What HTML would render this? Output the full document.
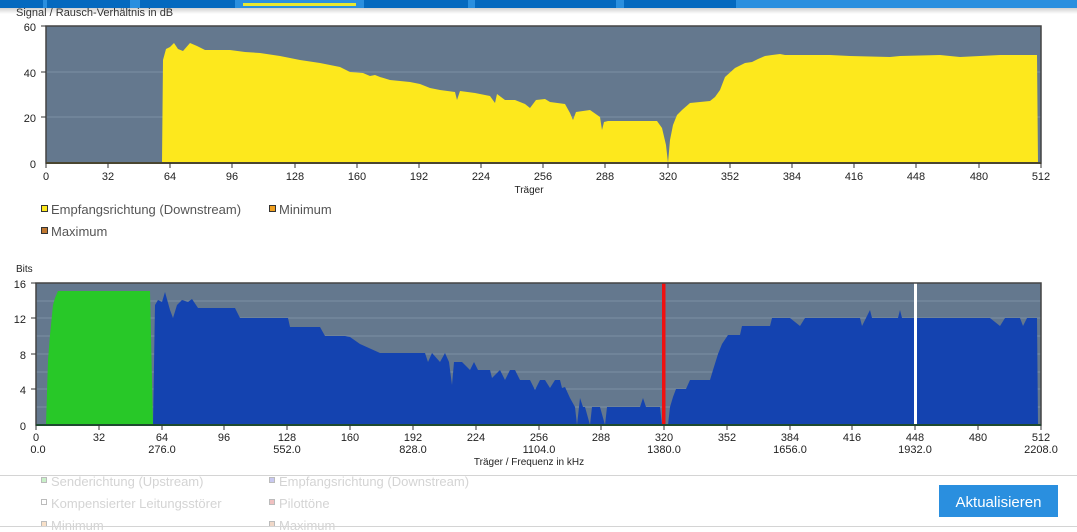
<!DOCTYPE html>
<html><head><meta charset="utf-8"><style>
html,body{margin:0;padding:0;background:#fff;width:1077px;height:532px;overflow:hidden}
svg{display:block;font-family:"Liberation Sans",sans-serif}
</style></head><body>
<svg width="1077" height="532" viewBox="0 0 1077 532" xmlns="http://www.w3.org/2000/svg">
<defs><linearGradient id="sh" x1="0" y1="0" x2="0" y2="1"><stop offset="0" stop-color="#000" stop-opacity="0.18"/><stop offset="1" stop-color="#000" stop-opacity="0"/></linearGradient></defs>
<!-- top bar -->
<rect x="0" y="0" width="1077" height="8" fill="#2a8fdf"/>
<rect x="0" y="0" width="43" height="8" fill="#0469bf"/>
<rect x="47" y="0" width="83" height="8" fill="#0469bf"/>
<rect x="140" y="0" width="95" height="8" fill="#0469bf"/>
<rect x="364" y="0" width="104" height="8" fill="#0469bf"/>
<rect x="475" y="0" width="141" height="8" fill="#0469bf"/>
<rect x="624" y="0" width="112" height="8" fill="#0469bf"/>
<rect x="243" y="3" width="113" height="3" fill="#e8e830"/>
<rect x="0" y="8" width="1077" height="6" fill="url(#sh)"/>

<text x="16" y="16" font-size="11" fill="#333">Signal / Rausch-Verhältnis in dB</text>
<!-- chart 1 -->
<rect x="46" y="26" width="995" height="137" fill="#64788e"/>
<line x1="46" y1="72" x2="1041" y2="72" stroke="#7d90a4" stroke-width="1"/>
<line x1="46" y1="117" x2="1041" y2="117" stroke="#7d90a4" stroke-width="1"/>
<polygon fill="#fde81d" points="162,163 163,60 166,49 170,47 174,43 178,49 183,51 190,43 197,46 205,50 215,50 230,50 245,52 260,53 280,56 300,60 320,63 340,67 350,72 363,73 370,76 375,75 380,77 390,80 410,82 420,84 430,88 440,90 455,92 457,100 460,91 475,93 490,96 495,103 497,94 505,100 515,100 525,104 530,108 536,100 545,99 550,102 565,104 570,113 573,120 576,112 590,110 600,117 602,130 604,122 608,121 630,121 657,121 662,128 666,145 668,163 670,140 673,125 677,115 682,110 690,103 700,102 710,101 715,97 720,90 725,77 735,68 745,63 752,62 758,59 765,56 772,55 780,54 785,55 800,55 830,55 850,56 890,57 900,56 940,55 960,57 980,56 1000,55 1037,55 1038,163"/>
<rect x="46" y="26" width="995" height="137" fill="none" stroke="#444" stroke-width="1.5"/>
<line x1="46" y1="163" x2="1041" y2="163" stroke="#4a4630" stroke-width="2"/>
<g font-size="11" fill="#222" text-anchor="end">
<text x="36" y="31">60</text><text x="36" y="77">40</text><text x="36" y="122">20</text><text x="36" y="168">0</text>
</g>
<g stroke="#333" stroke-width="1">
<line x1="46" y1="163" x2="46" y2="168"/><line x1="108" y1="163" x2="108" y2="168"/><line x1="170" y1="163" x2="170" y2="168"/><line x1="232" y1="163" x2="232" y2="168"/><line x1="295" y1="163" x2="295" y2="168"/><line x1="357" y1="163" x2="357" y2="168"/><line x1="419" y1="163" x2="419" y2="168"/><line x1="481" y1="163" x2="481" y2="168"/><line x1="543" y1="163" x2="543" y2="168"/><line x1="605" y1="163" x2="605" y2="168"/><line x1="668" y1="163" x2="668" y2="168"/><line x1="730" y1="163" x2="730" y2="168"/><line x1="792" y1="163" x2="792" y2="168"/><line x1="854" y1="163" x2="854" y2="168"/><line x1="916" y1="163" x2="916" y2="168"/><line x1="979" y1="163" x2="979" y2="168"/><line x1="1041" y1="163" x2="1041" y2="168"/>
<line x1="41" y1="26" x2="46" y2="26"/><line x1="41" y1="72" x2="46" y2="72"/><line x1="41" y1="117" x2="46" y2="117"/>
</g>
<g font-size="11" fill="#222" text-anchor="middle">
<text x="46" y="180">0</text><text x="108" y="180">32</text><text x="170" y="180">64</text><text x="232" y="180">96</text><text x="295" y="180">128</text><text x="357" y="180">160</text><text x="419" y="180">192</text><text x="481" y="180">224</text><text x="543" y="180">256</text><text x="605" y="180">288</text><text x="668" y="180">320</text><text x="730" y="180">352</text><text x="792" y="180">384</text><text x="854" y="180">416</text><text x="916" y="180">448</text><text x="979" y="180">480</text><text x="1041" y="180">512</text>
<text x="529" y="193" font-size="10">Träger</text>
</g>
<g font-size="13" fill="#555">
<rect x="41.5" y="205.5" width="6" height="6" fill="#fde81d" stroke="#333"/><text x="51" y="214">Empfangsrichtung (Downstream)</text>
<rect x="269.5" y="205.5" width="6" height="6" fill="#f0a020" stroke="#333"/><text x="279" y="214">Minimum</text>
<rect x="41.5" y="227.5" width="6" height="6" fill="#c07830" stroke="#333"/><text x="51" y="236">Maximum</text>
</g>

<text x="16" y="272" font-size="10" fill="#222">Bits</text>
<!-- chart 2 -->
<rect x="36" y="283" width="1005" height="142" fill="#64788e"/>
<g stroke="#7d90a4" stroke-width="1">
<line x1="36" y1="301" x2="1041" y2="301"/><line x1="36" y1="318" x2="1041" y2="318"/><line x1="36" y1="336" x2="1041" y2="336"/><line x1="36" y1="354" x2="1041" y2="354"/><line x1="36" y1="372" x2="1041" y2="372"/><line x1="36" y1="389" x2="1041" y2="389"/><line x1="36" y1="407" x2="1041" y2="407"/>
</g>
<polygon fill="#28c828" points="46,425 48,360 50,335 53,305 55,298 58,291 150,291 153,425"/>
<polygon fill="#1443b0" points="153,425 155,305 158,300 162,302 165,292 170,310 173,318 177,305 182,300 188,302 192,299 198,308 235,308 240,318 288,318 290,327 320,327 325,336 345,336 350,337 360,344 380,353 425,353 428,362 432,353 440,362 445,353 449,362 452,385 454,362 462,362 470,370 474,362 478,370 490,370 492,378 500,370 505,380 510,370 515,370 520,380 530,380 535,390 540,380 545,380 550,388 555,380 560,380 562,388 565,387 570,398 575,407 577,425 580,398 583,407 585,407 590,425 592,407 600,407 605,425 607,407 640,407 643,398 646,407 660,407 662,425 668,425 670,407 673,397 676,389 686,389 690,380 710,380 713,370 718,354 722,344 728,335 740,335 742,326 770,326 772,318 790,318 800,326 805,318 860,318 862,326 870,310 872,318 898,318 900,310 902,318 990,318 1000,326 1005,318 1020,318 1023,326 1027,318 1037,318 1038,425"/>
<rect x="662" y="283" width="3.5" height="142" fill="#f01010"/>
<rect x="914" y="283" width="3" height="142" fill="#fff"/>
<rect x="36" y="283" width="1005" height="142" fill="none" stroke="#444" stroke-width="1.5"/>
<line x1="36" y1="425" x2="1041" y2="425" stroke="#1e4a30" stroke-width="2"/>
<g font-size="11" fill="#222" text-anchor="end">
<text x="26" y="288">16</text><text x="26" y="323">12</text><text x="26" y="359">8</text><text x="26" y="394">4</text><text x="26" y="430">0</text>
</g>
<g stroke="#333" stroke-width="1">
<line x1="31" y1="283" x2="36" y2="283"/><line x1="31" y1="318" x2="36" y2="318"/><line x1="31" y1="354" x2="36" y2="354"/><line x1="31" y1="389" x2="36" y2="389"/>
<line x1="36" y1="425" x2="36" y2="430"/><line x1="99" y1="425" x2="99" y2="430"/><line x1="162" y1="425" x2="162" y2="430"/><line x1="224" y1="425" x2="224" y2="430"/><line x1="287" y1="425" x2="287" y2="430"/><line x1="350" y1="425" x2="350" y2="430"/><line x1="413" y1="425" x2="413" y2="430"/><line x1="476" y1="425" x2="476" y2="430"/><line x1="539" y1="425" x2="539" y2="430"/><line x1="601" y1="425" x2="601" y2="430"/><line x1="664" y1="425" x2="664" y2="430"/><line x1="727" y1="425" x2="727" y2="430"/><line x1="790" y1="425" x2="790" y2="430"/><line x1="852" y1="425" x2="852" y2="430"/><line x1="915" y1="425" x2="915" y2="430"/><line x1="978" y1="425" x2="978" y2="430"/><line x1="1041" y1="425" x2="1041" y2="430"/>
</g>
<g font-size="11" fill="#222" text-anchor="middle">
<text x="36" y="441">0</text><text x="99" y="441">32</text><text x="162" y="441">64</text><text x="224" y="441">96</text><text x="287" y="441">128</text><text x="350" y="441">160</text><text x="413" y="441">192</text><text x="476" y="441">224</text><text x="539" y="441">256</text><text x="601" y="441">288</text><text x="664" y="441">320</text><text x="727" y="441">352</text><text x="790" y="441">384</text><text x="852" y="441">416</text><text x="915" y="441">448</text><text x="978" y="441">480</text><text x="1041" y="441">512</text>
<text x="38" y="453">0.0</text><text x="162" y="453">276.0</text><text x="287" y="453">552.0</text><text x="413" y="453">828.0</text><text x="539" y="453">1104.0</text><text x="664" y="453">1380.0</text><text x="790" y="453">1656.0</text><text x="915" y="453">1932.0</text><text x="1041" y="453">2208.0</text>
<text x="529" y="465" font-size="10">Träger / Frequenz in kHz</text>
</g>
<line x1="0" y1="475.5" x2="1077" y2="475.5" stroke="#d4d4d4"/>
<g font-size="13" fill="#d4d4d4">
<rect x="41.5" y="477.5" width="5" height="5" fill="#c8f0c8" stroke="#bbb"/><text x="51" y="486">Senderichtung (Upstream)</text>
<rect x="269.5" y="477.5" width="5" height="5" fill="#c8c8f0" stroke="#bbb"/><text x="279" y="486">Empfangsrichtung (Downstream)</text>
<rect x="41.5" y="499.5" width="5" height="5" fill="#fff" stroke="#bbb"/><text x="51" y="508">Kompensierter Leitungsstörer</text>
<rect x="269.5" y="499.5" width="5" height="5" fill="#f0c0c0" stroke="#bbb"/><text x="279" y="508">Pilottöne</text>
<rect x="41.5" y="521.5" width="5" height="5" fill="#f8e0c8" stroke="#bbb"/><text x="51" y="530">Minimum</text>
<rect x="269.5" y="521.5" width="5" height="5" fill="#f0d8c8" stroke="#bbb"/><text x="279" y="530">Maximum</text>
</g>
<line x1="0" y1="526.5" x2="1077" y2="526.5" stroke="#d4d4d4"/>
<rect x="939" y="485" width="119" height="32" fill="#2a8fdf"/>
<text x="998.5" y="507" font-size="15" fill="#fff" text-anchor="middle">Aktualisieren</text>
</svg>
</body></html>
